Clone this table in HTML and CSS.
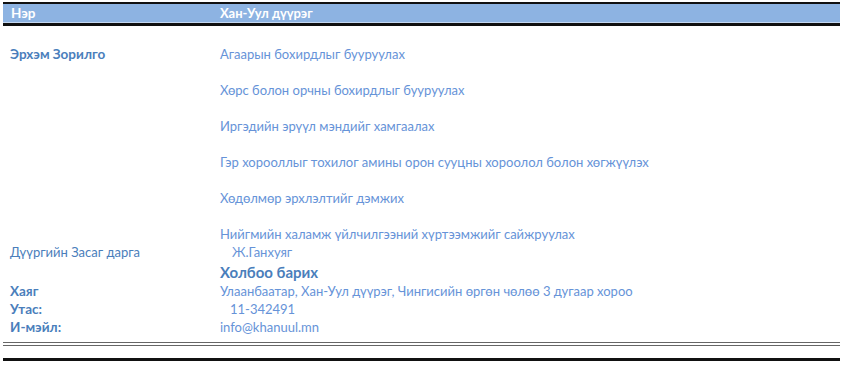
FILE: index.html
```html
<!DOCTYPE html>
<html lang="mn">
<head>
    <meta charset="UTF-8">
    <title>Хан-Уул дүүрэг</title>
    <link rel="stylesheet" href="styles.css">
</head>
<body>
    <div class="head">
        <span class="c1">Нэр</span>
        <span class="c2">Хан-Уул дүүрэг</span>
    </div>

    <div class="info">
        <div class="row">
            <div class="c1 lbl">Эрхэм Зорилго</div>
            <div class="c2 goals">
                <p>Агаарын бохирдлыг бууруулах</p>
                <p>Хөрс болон орчны бохирдлыг бууруулах</p>
                <p>Иргэдийн эрүүл мэндийг хамгаалах</p>
                <p>Гэр хорооллыг тохилог амины орон сууцны хороолол болон хөгжүүлэх</p>
                <p>Хөдөлмөр эрхлэлтийг дэмжих</p>
                <p>Нийгмийн халамж үйлчилгээний хүртээмжийг сайжруулах</p>
            </div>
        </div>
        <div class="row">
            <div class="c1 lbl2">Дүүргийн Засаг дарга</div>
            <div class="c2 ind">Ж.Ганхуяг</div>
        </div>
        <div class="row">
            <div class="c1"></div>
            <div class="c2 contact">Холбоо барих</div>
        </div>
        <div class="row">
            <div class="c1 lbl">Хаяг</div>
            <div class="c2">Улаанбаатар, Хан-Уул дүүрэг, Чингисийн өргөн чөлөө 3 дугаар хороо</div>
        </div>
        <div class="row">
            <div class="c1 lbl">Утас:</div>
            <div class="c2 ind2">11-342491</div>
        </div>
        <div class="row">
            <div class="c1 lbl">И-мэйл:</div>
            <div class="c2">info@khanuul.mn</div>
        </div>
    </div>

    <div class="foot"></div>
</body>
</html>
```

FILE: styles.css
```css
*{margin: 0;padding: 0;}
body{font-family: Lato, "Open Sans", "Noto Sans", sans-serif;font-size: 13px;color: #6693d8;background: #fff;padding-top: 2px;}
.head{display: flex;margin: 0 5px 0 3px;height: 19px;line-height: 19px;background: #8db3e2;border-top: 2px solid #111;border-bottom: 3px solid #111;box-shadow: inset 0 -1px 0 #c6d9f1;color: #fff;font-weight: bold;}
.head .c1{width: 209px;padding-left: 8px;font-size: 13.5px;}
.info{padding-top: 19px;}
.row{display: flex;line-height: 18px;}
.c1{width: 210px;padding-left: 10px;flex: none;}
.lbl{color: #4a7ebb;font-weight: bold;font-size: 13.5px;}
.lbl2{color: #4a7ebb;}
.goals p{margin-bottom: 18px;}
.goals p:last-child{margin-bottom: 0;}
.ind{padding-left: 12px;}
.ind2{padding-left: 10px;}
.contact{color: #4a7ebb;font-weight: bold;font-size: 15px;line-height: 20px;padding-top: 1px;}
.foot{margin: 6px 5px 0 3px;height: 12px;border-top: 4px double #666;border-bottom: 3px solid #111;}
```
